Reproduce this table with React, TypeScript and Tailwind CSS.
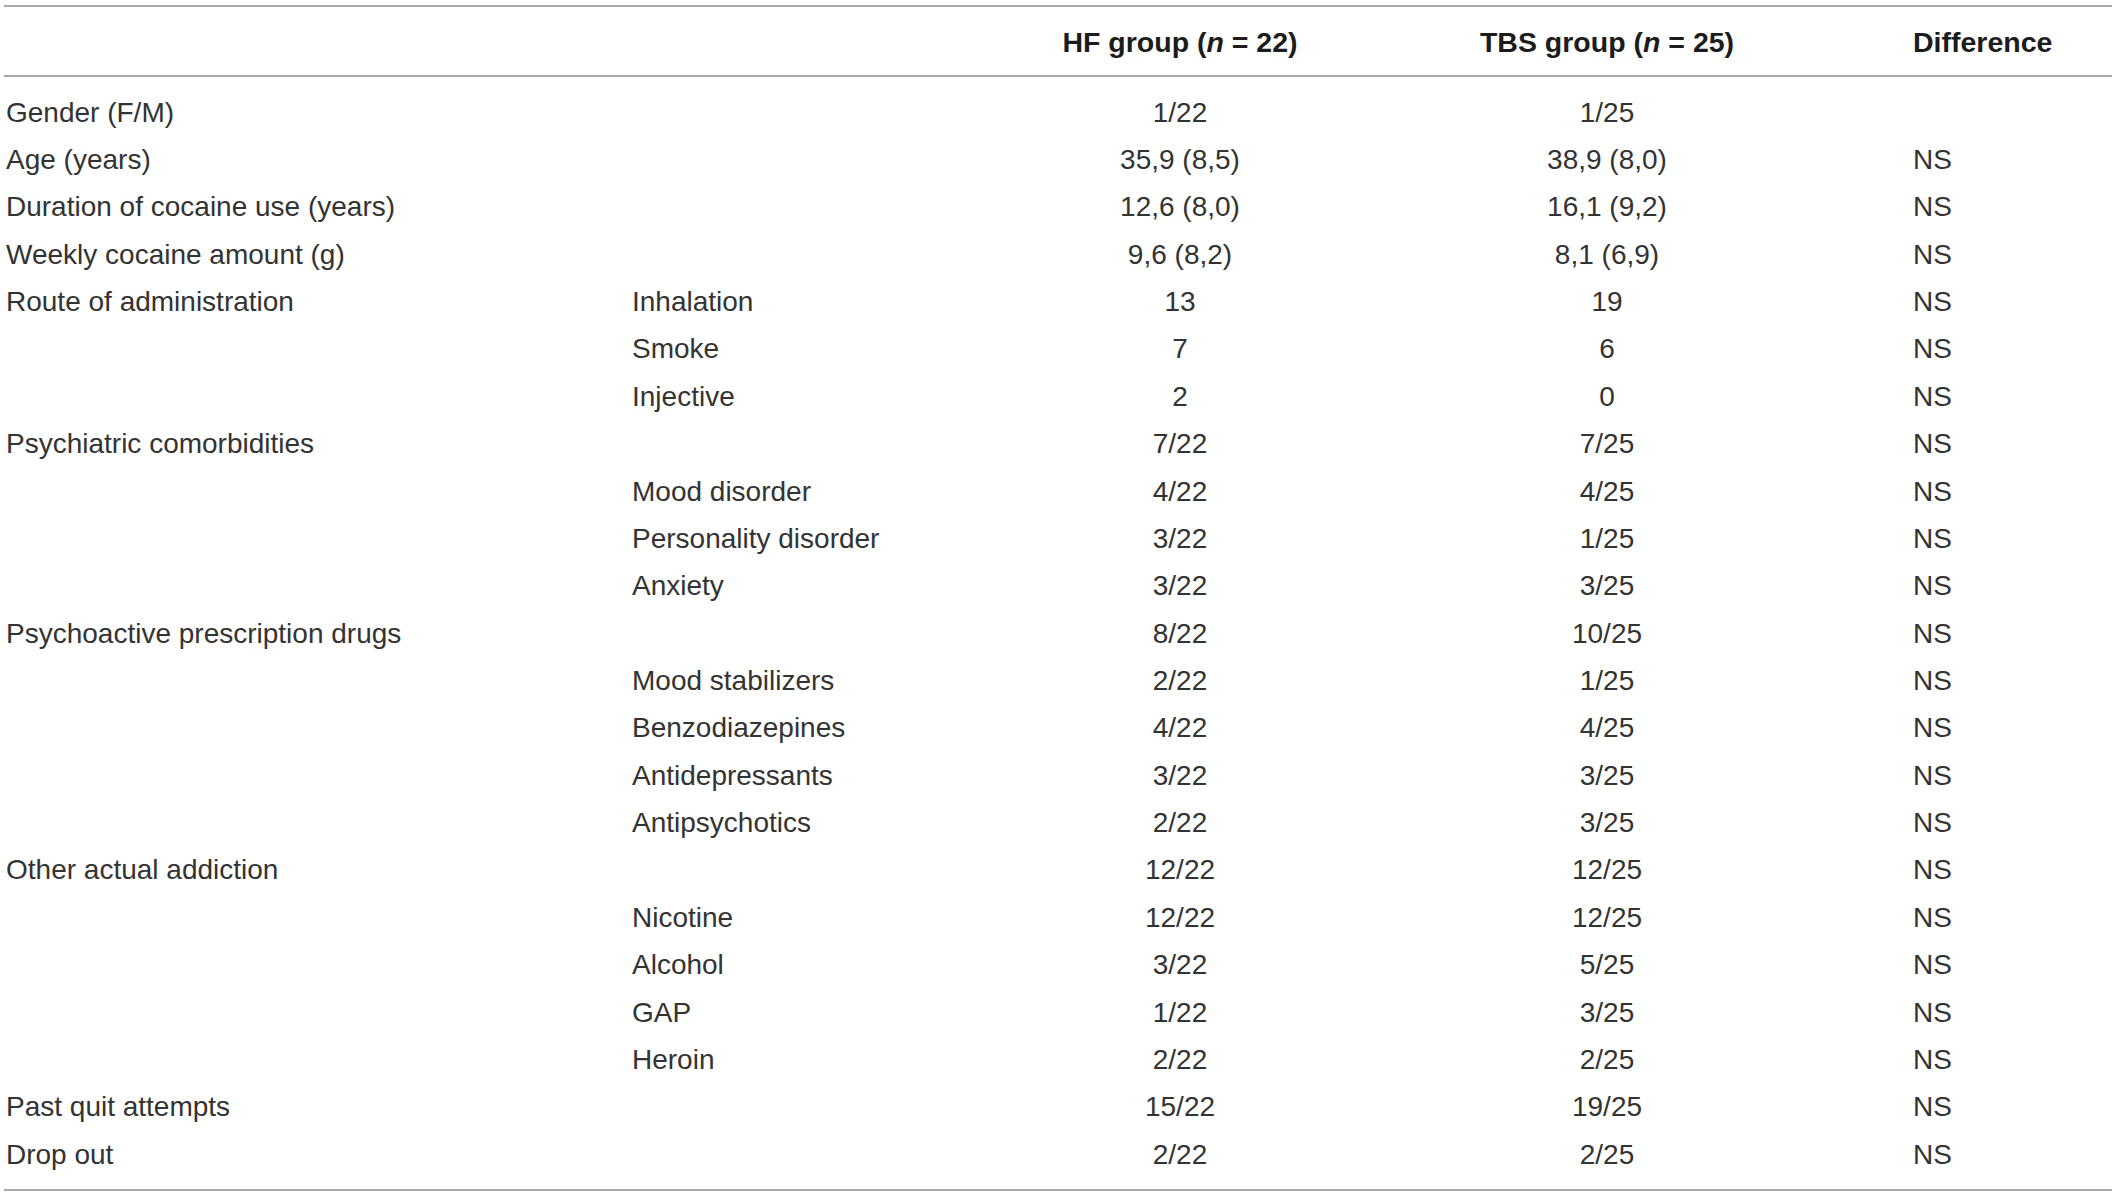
import React from "react";

const rows: [string, string, string, string, string][] = [
  ["Gender (F/M)", "", "1/22", "1/25", ""],
  ["Age (years)", "", "35,9 (8,5)", "38,9 (8,0)", "NS"],
  ["Duration of cocaine use (years)", "", "12,6 (8,0)", "16,1 (9,2)", "NS"],
  ["Weekly cocaine amount (g)", "", "9,6 (8,2)", "8,1 (6,9)", "NS"],
  ["Route of administration", "Inhalation", "13", "19", "NS"],
  ["", "Smoke", "7", "6", "NS"],
  ["", "Injective", "2", "0", "NS"],
  ["Psychiatric comorbidities", "", "7/22", "7/25", "NS"],
  ["", "Mood disorder", "4/22", "4/25", "NS"],
  ["", "Personality disorder", "3/22", "1/25", "NS"],
  ["", "Anxiety", "3/22", "3/25", "NS"],
  ["Psychoactive prescription drugs", "", "8/22", "10/25", "NS"],
  ["", "Mood stabilizers", "2/22", "1/25", "NS"],
  ["", "Benzodiazepines", "4/22", "4/25", "NS"],
  ["", "Antidepressants", "3/22", "3/25", "NS"],
  ["", "Antipsychotics", "2/22", "3/25", "NS"],
  ["Other actual addiction", "", "12/22", "12/25", "NS"],
  ["", "Nicotine", "12/22", "12/25", "NS"],
  ["", "Alcohol", "3/22", "5/25", "NS"],
  ["", "GAP", "1/22", "3/25", "NS"],
  ["", "Heroin", "2/22", "2/25", "NS"],
  ["Past quit attempts", "", "15/22", "19/25", "NS"],
  ["Drop out", "", "2/22", "2/25", "NS"],
];

export default function App() {
  return (
    <div
      className="w-[2118px] h-[1195px] bg-white overflow-hidden"
      style={{ fontFamily: '"Liberation Sans", Arial, sans-serif' }}
    >
      <div className="ml-[4px] mt-[5px] w-[2108px] border-t-2 border-b-2 border-[#a8a8a8]">
        <div className="grid grid-cols-[628px_348px_400px_454px_1fr] h-[70px] items-center border-b-2 border-[#a8a8a8] text-[28.5px] font-bold text-[#1c1c1c] leading-none">
          <div />
          <div />
          <div className="text-center pt-[2px]">
            HF group (<span className="italic">n</span> = 22)
          </div>
          <div className="text-center pt-[2px]">
            TBS group (<span className="italic">n</span> = 25)
          </div>
          <div className="pl-[79px] pt-[2px]">Difference</div>
        </div>
        <div className="pt-[12px] pb-[11px]">
          {rows.map((r, i) => (
            <div
              key={i}
              className="grid grid-cols-[628px_348px_400px_454px_1fr] h-[47.36px] items-center text-[28px] text-[#333333] leading-none"
            >
              <div className="pl-[2px]">{r[0]}</div>
              <div>{r[1]}</div>
              <div className="text-center">{r[2]}</div>
              <div className="text-center">{r[3]}</div>
              <div className="pl-[79px]">{r[4]}</div>
            </div>
          ))}
        </div>
      </div>
    </div>
  );
}
